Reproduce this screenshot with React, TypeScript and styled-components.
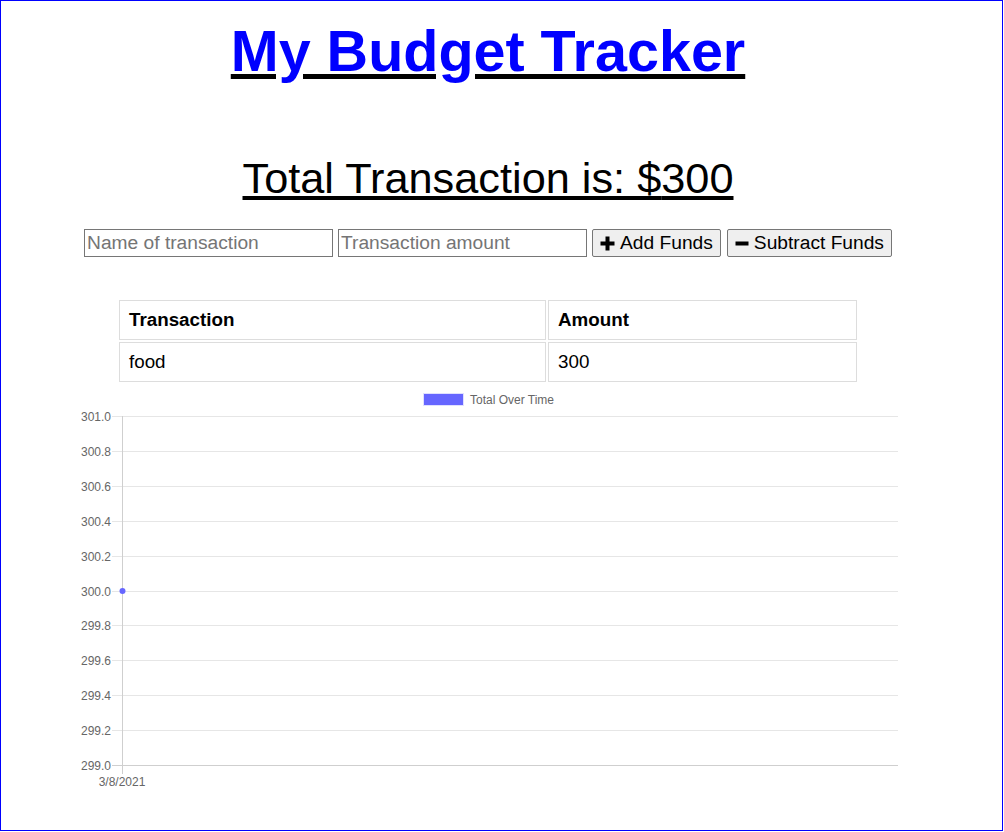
import styled, { createGlobalStyle } from 'styled-components'

const GlobalStyle = createGlobalStyle`
  html, body {
    margin: 0;
    padding: 0;
    background: #fff;
  }
  body {
    font-family: 'Liberation Sans', Arial, sans-serif;
    color: #000;
  }
`

const Page = styled.div`
  box-sizing: border-box;
  width: 1003px;
  height: 831px;
  border: 1px solid #0000ff;
  overflow: hidden;
`

const Main = styled.main`
  width: 974px;
  display: flex;
  flex-direction: column;
  align-items: center;
`

const Title = styled.h1`
  margin: 17px 0 0;
  font-size: 57.5px;
  line-height: 66px;
  font-weight: 700;
  text-decoration: underline;
  text-decoration-color: #000;

  a {
    color: #0000ff;
    text-decoration: none;
  }
`

const Total = styled.h2`
  margin: 70px 0 0;
  font-size: 43.3px;
  line-height: 48px;
  font-weight: 400;
  text-decoration: underline;
`

const Form = styled.div`
  display: flex;
  gap: 5px;
  margin-top: 27px;
  height: 28px;
`

const Input = styled.input`
  box-sizing: border-box;
  width: 249px;
  height: 28px;
  border: 1px solid #767676;
  border-radius: 0;
  padding: 1px 2px;
  font-family: inherit;
  font-size: 19.2px;

  &::placeholder {
    color: #757575;
  }
`

const Button = styled.button<{ $gap?: number }>`
  box-sizing: border-box;
  height: 28px;
  display: flex;
  align-items: center;
  gap: 5px;
  padding: 0 7px;
  margin-left: ${({ $gap }) => $gap ?? 0}px;
  background: #efefef;
  border: 1px solid #767676;
  border-radius: 2px;
  font-family: inherit;
  font-size: 19.2px;
  color: #000;
`

const Table = styled.table`
  box-sizing: border-box;
  width: 742px;
  margin-top: 41px;
  table-layout: fixed;
  border-collapse: separate;
  border-spacing: 2px;

  th,
  td {
    box-sizing: border-box;
    height: 40px;
    padding: 9px;
    border: 1px solid #dddddd;
    font-size: 18.8px;
    line-height: 20px;
    text-align: left;
  }

  th {
    font-weight: 700;
  }

  th:first-child {
    width: 427px;
  }
`

const ChartBox = styled.div`
  width: 820px;
  height: 410px;

  svg {
    display: block;
    font-family: 'Liberation Sans', Arial, sans-serif;
  }
`

const PlusIcon = () => (
  <svg width='15' height='15' viewBox='0 0 15 15'>
    <rect x='5.5' y='0.5' width='4' height='14' fill='#000' />
    <rect x='0.5' y='5.5' width='14' height='4' fill='#000' />
  </svg>
)

const MinusIcon = () => (
  <svg width='14' height='15' viewBox='0 0 14 15'>
    <rect x='0.5' y='5.5' width='13' height='4' fill='#000' />
  </svg>
)

const TRANSACTIONS = [{ name: 'food', value: 300 }]

const TICKS = [301.0, 300.8, 300.6, 300.4, 300.2, 300.0, 299.8, 299.6, 299.4, 299.2, 299.0]

const Chart = () => {
  const top = 32
  const bottom = 381
  const axisX = 44
  const right = 820
  const step = (bottom - top) / (TICKS.length - 1)
  const yOf = (v: number) => top + ((301 - v) / 2) * (bottom - top)

  return (
    <ChartBox>
      <svg width='820' height='410' viewBox='0 0 820 410'>
        <rect x='345.5' y='9.5' width='40' height='12' fill='#6666ff' stroke='#e0e0ff' />
        <text x='392' y='19.5' fontSize='12' fill='#666'>
          Total Over Time
        </text>
        {TICKS.map((t, i) => {
          const y = Math.round(top + i * step) + 0.5
          const last = i === TICKS.length - 1
          return (
            <g key={t}>
              <line
                x1='34'
                x2={right}
                y1={y}
                y2={y}
                stroke={last ? '#cfcfcf' : '#e6e6e6'}
              />
              <text x='33' y={y + 4} fontSize='12' fill='#666' textAnchor='end'>
                {t.toFixed(1)}
              </text>
            </g>
          )
        })}
        <line x1={axisX + 0.5} x2={axisX + 0.5} y1={top} y2={bottom + 9} stroke='#cfcfcf' />
        <text x={axisX} y='402' fontSize='12' fill='#666' textAnchor='middle'>
          3/8/2021
        </text>
        <circle cx={axisX + 0.5} cy={yOf(300) + 0.5} r='3' fill='#6666ff' />
      </svg>
    </ChartBox>
  )
}

export default function App() {
  const total = TRANSACTIONS.reduce((sum, t) => sum + t.value, 0)

  return (
    <>
      <GlobalStyle />
      <Page>
        <Main>
          <Title>
            <a href='#'>My Budget Tracker</a>
          </Title>
          <Total>Total Transaction is: ${total}</Total>
          <Form>
            <Input type='text' placeholder='Name of transaction' />
            <Input type='number' placeholder='Transaction amount' />
            <Button>
              <PlusIcon />
              Add Funds
            </Button>
            <Button $gap={1}>
              <MinusIcon />
              Subtract Funds
            </Button>
          </Form>
          <Table>
            <thead>
              <tr>
                <th>Transaction</th>
                <th>Amount</th>
              </tr>
            </thead>
            <tbody>
              {TRANSACTIONS.map((t) => (
                <tr key={t.name}>
                  <td>{t.name}</td>
                  <td>{t.value}</td>
                </tr>
              ))}
            </tbody>
          </Table>
          <Chart />
        </Main>
      </Page>
    </>
  )
}
